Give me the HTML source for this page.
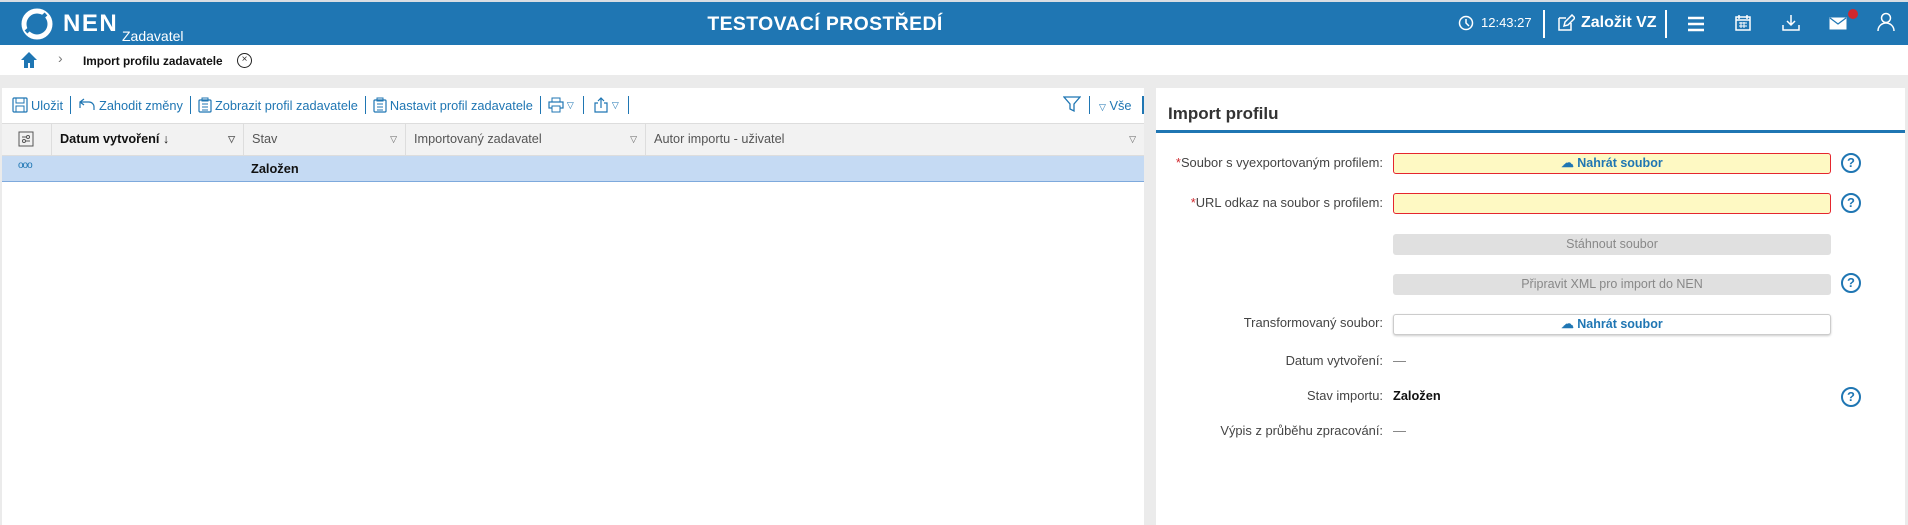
<!DOCTYPE html>
<html><head><meta charset="utf-8"><style>
*{box-sizing:border-box;margin:0;padding:0}
body{width:1908px;height:525px;overflow:hidden;background:#ebebeb;font-family:"Liberation Sans",sans-serif;font-size:13px;color:#333;position:relative}
.a{position:absolute;white-space:nowrap}
.hdr{left:0;top:0;width:1908px;height:45px;background:#1f76b3;border-top:2px solid #d8dde3}
.w{color:#fff}
.bc{left:0;top:45px;width:1908px;height:30px;background:#fff}
.lp{left:2px;top:88px;width:1142px;height:437px;background:#fff}
.rp{left:1156px;top:88px;width:749px;height:437px;background:#fff}
.tbar{left:12px;top:95px;height:20px;display:flex;align-items:center;color:#1f76b3;font-size:12.8px}
.tbar svg{margin-right:3px}
.tbar .s{width:1px;height:18px;background:#1f76b3;margin:0 7px}
.gh{top:123px;height:33px;background:#f2f2f2;border-bottom:1px solid #ddd;border-top:1px solid #ddd}
.col{top:123px;height:33px;border-left:1px solid #ddd;line-height:32px;padding-left:8px;font-size:12.7px;color:#555}
.tri{font-size:9px;color:#666}
.lbl{right:525px;font-size:12.9px;color:#444;text-align:right}
.fld{left:1393px;width:438px;height:21px;border-radius:3px}
.q{left:1841px;width:20px;height:20px;border:2px solid #1f76b3;border-radius:50%;color:#1f76b3;font-weight:bold;font-size:13px;text-align:center;line-height:16px}
</style></head><body>
<div class="a hdr"></div>
<svg class="a" style="left:20px;top:8px" width="34" height="32" viewBox="0 0 34 32"><circle cx="17" cy="16" r="13" fill="none" stroke="#fff" stroke-width="5"/><path d="M6 24 L26 6" stroke="#1f76b3" stroke-width="4"/></svg>
<div class="a w" style="left:63px;top:10px;font-size:24px;font-weight:bold;letter-spacing:1.5px">NEN</div>
<div class="a w" style="left:122px;top:28px;font-size:14px">Zadavatel</div>
<div class="a w" style="left:0;width:1650px;text-align:center;top:13px;font-size:19.4px;font-weight:bold;letter-spacing:.4px">TESTOVACÍ PROSTŘEDÍ</div>
<svg class="a" style="left:1458px;top:15px" width="16" height="16"><circle cx="8" cy="8" r="6.5" fill="none" stroke="#fff" stroke-width="1.5"/><path d="M8 4v4l3 3" fill="none" stroke="#fff" stroke-width="1.5"/></svg>
<div class="a w" style="left:1481px;top:15px;font-size:13px">12:43:27</div>
<div class="a" style="left:1543px;top:10px;width:2px;height:28px;background:#fff"></div>
<svg class="a" style="left:1557px;top:14px" width="18" height="18"><path d="M2 4h7M2 4v12h12V9" fill="none" stroke="#fff" stroke-width="1.5"/><path d="M7 12l1-4 7-7 3 3-7 7z" fill="none" stroke="#fff" stroke-width="1.5"/></svg>
<div class="a w" style="left:1581px;top:14px;font-size:16px;font-weight:bold">Založit VZ</div>
<div class="a" style="left:1665px;top:10px;width:2px;height:28px;background:#fff"></div>
<svg class="a" style="left:1687px;top:16px" width="18" height="16"><path d="M1 2h16M1 8h16M1 14h16" stroke="#fff" stroke-width="2.5"/></svg>
<svg class="a" style="left:1734px;top:14px" width="18" height="18"><rect x="2" y="3" width="14" height="13" fill="none" stroke="#fff" stroke-width="1.5"/><path d="M2 6h14M5 1v4M13 1v4" stroke="#fff" stroke-width="1.5"/><path d="M5 9h8M5 12h8M7 8v6M10 8v6" stroke="#fff" stroke-width="1"/></svg>
<svg class="a" style="left:1782px;top:14px" width="18" height="18"><path d="M9 1v9M5 7l4 4 4-4M1 11v5h16v-5" fill="none" stroke="#fff" stroke-width="1.5"/></svg>
<svg class="a" style="left:1829px;top:17px" width="18" height="13"><rect x="0.5" y="0.5" width="17" height="12" fill="#fff"/><path d="M1 1l8 6 8-6" fill="none" stroke="#1f76b3" stroke-width="1.2"/></svg>
<div class="a" style="left:1848px;top:9px;width:10px;height:10px;border-radius:50%;background:#d0282e"></div>
<svg class="a" style="left:1877px;top:12px" width="18" height="20"><circle cx="9" cy="6" r="4.5" fill="none" stroke="#fff" stroke-width="1.5"/><path d="M1 19c0-5 4-8 8-8s8 3 8 8" fill="none" stroke="#fff" stroke-width="1.5"/></svg>
<div class="a bc"></div>
<svg class="a" style="left:20px;top:51px" width="18" height="18"><path d="M9 1L1 9h3v8h4v-5h2v5h4V9h3z" fill="#1f76b3"/></svg>
<div class="a" style="left:58px;top:50px;font-size:14px;color:#777">&#x203A;</div>
<div class="a" style="left:83px;top:54px;font-size:11.8px;font-weight:bold;color:#111">Import profilu zadavatele</div>
<div class="a" style="left:237px;top:53px;width:15px;height:15px;border:1.3px solid #222;border-radius:50%;font-size:10px;text-align:center;line-height:12px">×</div>
<div class="a lp"></div>
<div class="a rp"></div>
<div class="a tbar">
<svg width="16" height="16"><rect x="1" y="1" width="14" height="14" rx="1" fill="none" stroke="#1f76b3" stroke-width="1.2"/><rect x="4" y="1" width="8" height="5" fill="none" stroke="#1f76b3"/><rect x="4" y="9" width="8" height="6" fill="none" stroke="#1f76b3"/></svg>Uložit<span class="s"></span>
<svg width="18" height="14"><path d="M2 10V4h9a5 5 0 0 1 5 5v3M2 4l4-3M2 4l4 3" fill="none" stroke="#1f76b3" stroke-width="1.2"/></svg>Zahodit změny<span class="s"></span>
<svg width="14" height="16"><rect x="1" y="3" width="12" height="12" rx="1" fill="none" stroke="#1f76b3" stroke-width="1.2"/><rect x="4" y="1" width="6" height="3" fill="none" stroke="#1f76b3"/><path d="M4 7h6M4 10h6M4 13h6" stroke="#1f76b3"/></svg>Zobrazit profil zadavatele<span class="s"></span>
<svg width="14" height="16"><rect x="1" y="3" width="12" height="12" rx="1" fill="none" stroke="#1f76b3" stroke-width="1.2"/><rect x="4" y="1" width="6" height="3" fill="none" stroke="#1f76b3"/><path d="M4 7h6M4 10h6M4 13h6" stroke="#1f76b3"/></svg>Nastavit profil zadavatele<span class="s"></span>
<svg width="16" height="16"><rect x="4" y="1" width="8" height="4" fill="none" stroke="#1f76b3"/><rect x="1" y="5" width="14" height="6" fill="none" stroke="#1f76b3" stroke-width="1.2"/><rect x="4" y="9" width="8" height="6" fill="#fff" stroke="#1f76b3"/></svg><span class="tri" style="color:#1f76b3">▽</span><span class="s" style="margin:0 9px"></span>
<svg width="16" height="16"><path d="M5 6H2v9h12V6h-3M8 11V1M5 4l3-3 3 3" fill="none" stroke="#1f76b3" stroke-width="1.2"/></svg><span class="tri" style="color:#1f76b3">▽</span><span class="s" style="margin:0 9px"></span>
</div>
<svg class="a" style="left:1063px;top:95px" width="18" height="18"><path d="M1 2h16l-6 7v7l-4-2V9z" fill="none" stroke="#1f76b3" stroke-width="1.3"/></svg>
<div class="a" style="left:1089px;top:96px;width:1px;height:18px;background:#1f76b3"></div>
<div class="a" style="left:1099px;top:98px;color:#1f76b3;font-size:12.8px"><span class="tri" style="color:#1f76b3">▽</span> Vše</div>
<div class="a" style="left:1142px;top:96px;width:2px;height:18px;background:#1f76b3"></div>
<div class="a gh" style="left:2px;width:1142px"></div>
<svg class="a" style="left:18px;top:131px" width="16" height="16"><rect x="1" y="1" width="14" height="14" fill="none" stroke="#555"/><path d="M4 6h8M4 10h8" stroke="#555"/><circle cx="10" cy="6" r="1.5" fill="#fff" stroke="#555"/><circle cx="6" cy="10" r="1.5" fill="#fff" stroke="#555"/></svg>
<div class="a col" style="left:51px;width:192px;font-weight:bold;color:#111">Datum vytvoření ↓<span class="a tri" style="right:8px">▽</span></div>
<div class="a col" style="left:243px;width:162px">Stav<span class="a tri" style="right:8px">▽</span></div>
<div class="a col" style="left:405px;width:240px">Importovaný zadavatel<span class="a tri" style="right:8px">▽</span></div>
<div class="a col" style="left:645px;width:499px">Autor importu - uživatel<span class="a tri" style="right:8px">▽</span></div>
<div class="a" style="left:2px;top:156px;width:1142px;height:26px;background:#c5daf3;border-bottom:1.5px solid #7ea9dc"></div>
<div class="a" style="left:18px;top:160px;font-size:10px;color:#1f76b3;letter-spacing:-1px">ooo</div>
<div class="a" style="left:251px;top:161px;font-size:12.8px;font-weight:bold;color:#111">Založen</div>
<div class="a" style="left:1168px;top:104px;font-size:17px;font-weight:bold;color:#333">Import profilu</div>
<div class="a" style="left:1156px;top:130px;width:749px;height:3px;background:#1f76b3"></div>
<div class="a lbl" style="top:155px"><span style="color:#d0282e">*</span>Soubor s vyexportovaným profilem:</div>
<div class="a fld" style="top:153px;background:#fef9c3;border:1.5px solid #e5262e;color:#1f76b3;font-weight:bold;text-align:center;font-size:12.5px;line-height:18px">☁ Nahrát soubor</div>
<div class="a q" style="top:153px">?</div>
<div class="a lbl" style="top:195px"><span style="color:#d0282e">*</span>URL odkaz na soubor s profilem:</div>
<div class="a fld" style="top:193px;background:#fef9c3;border:1.5px solid #e5262e"></div>
<div class="a q" style="top:193px">?</div>
<div class="a fld" style="top:234px;background:#e0e0e0;color:#888;text-align:center;line-height:21px;font-size:12.5px">Stáhnout soubor</div>
<div class="a fld" style="top:274px;background:#e0e0e0;color:#888;text-align:center;line-height:21px;font-size:12.5px">Připravit XML pro import do NEN</div>
<div class="a q" style="top:273px">?</div>
<div class="a lbl" style="top:315px">Transformovaný soubor:</div>
<div class="a fld" style="top:314px;background:#fff;border:1px solid #ccc;box-shadow:0 1px 2px #ccc;color:#1f76b3;font-weight:bold;text-align:center;font-size:12.5px;line-height:19px">☁ Nahrát soubor</div>
<div class="a lbl" style="top:353px">Datum vytvoření:</div><div class="a" style="left:1393px;top:353px;color:#777">—</div>
<div class="a lbl" style="top:388px">Stav importu:</div><div class="a" style="left:1393px;top:388px;font-weight:bold;color:#111;font-size:12.8px">Založen</div>
<div class="a q" style="top:387px">?</div>
<div class="a lbl" style="top:423px">Výpis z průběhu zpracování:</div><div class="a" style="left:1393px;top:423px;color:#777">—</div>
</body></html>
